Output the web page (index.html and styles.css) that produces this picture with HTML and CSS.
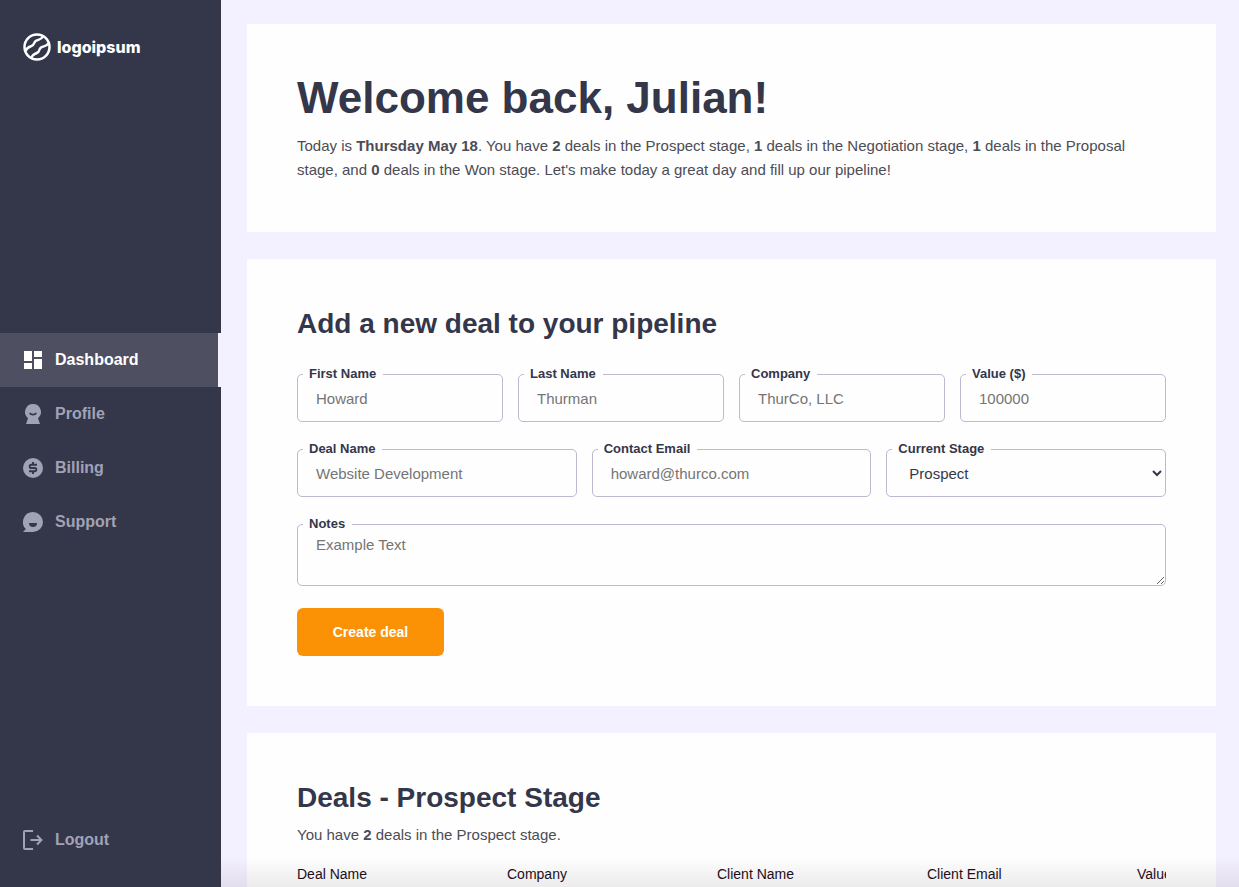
FILE: index.html
```html
<!DOCTYPE html>
<html lang="en">
  <head>
    <meta charset="utf-8">
    <meta name="viewport" content="width=device-width, initial-scale=1.0">
    <title>Dashboard</title>
    <link rel="stylesheet" href="styles.css">
  </head>
  <body>
    <div class="app">
      <aside class="sidebar">
        <a href="#" class="logo">
          <svg class="logo__mark" viewBox="0 0 28 28" fill="none" stroke="currentColor" stroke-width="2.5" aria-hidden="true">
            <circle cx="14" cy="14" r="12.5"/>
            <path d="M2.500 18C4 14.500 5.500 13.800 8 13.200C12 12.300 10.200 9.500 13 7.800C15.500 6.300 18 7.300 20 3.200"/>
            <path d="M8 25C9.500 21 11.500 21 13.800 20C17.500 18.500 15.200 16 18.200 14.300C21 12.800 23.500 13.800 25.600 10"/>
          </svg>
          <span>logoipsum</span>
        </a>
        <nav class="nav">
          <a href="#" class="nav__link nav__link--active">
            <svg class="nav__icon" viewBox="0 0 20 20" fill="currentColor" aria-hidden="true">
              <path d="M1 1h8v10H1zM11 1h8v6h-8zM1 13h8v6H1zM11 9h8v10h-8z"/>
            </svg>
            Dashboard
          </a>
          <a href="#" class="nav__link">
            <svg class="nav__icon" viewBox="0 0 20 20" aria-hidden="true">
              <path fill="currentColor" d="M10 0a8 8 0 0 1 5 14.200L17 20H3l2-5.800A8 8 0 0 1 10 0z"/>
              <path class="nav__cut" d="M6.800 8.800a3.400 2.800 0 0 0 6.400 0" fill="none" stroke-width="1.700"/>
            </svg>
            Profile
          </a>
          <a href="#" class="nav__link">
            <svg class="nav__icon" viewBox="0 0 20 20" aria-hidden="true">
              <circle cx="10" cy="10" r="10" fill="currentColor"/>
              <path class="nav__cut" d="M14 6.800H8.300a1.600 1.600 0 0 0 0 3.200h3.400a1.600 1.600 0 0 1 0 3.200H6M10 4v3M10 13v3" fill="none" stroke-width="1.900"/>
            </svg>
            Billing
          </a>
          <a href="#" class="nav__link">
            <svg class="nav__icon" viewBox="0 0 20 20" fill="currentColor" aria-hidden="true">
              <path fill-rule="evenodd" d="M10 0a10 10 0 0 1 0 20H0l2.900-2.900A10 10 0 0 1 10 0zM6 11a4 4 0 0 0 8 0z"/>
            </svg>
            Support
          </a>
        </nav>
        <a href="#" class="nav__link nav__link--logout">
          <svg class="nav__icon" viewBox="0 0 20 20" fill="none" stroke="currentColor" stroke-width="2" aria-hidden="true">
            <path d="M10 1H2a1 1 0 0 0-1 1v16a1 1 0 0 0 1 1h8M7.500 10H18M14 5.500l4.500 4.500-4.500 4.500"/>
          </svg>
          Logout
        </a>
      </aside>

      <main class="main">
        <section class="card">
          <h1 class="card__heading">Welcome back, Julian!</h1>
          <p class="text">Today is <strong>Thursday May 18</strong>. You have <strong>2</strong> deals in the Prospect stage, <strong>1</strong> deals in the Negotiation stage, <strong>1</strong> deals in the Proposal stage, and <strong>0</strong> deals in the Won stage. Let's make today a great day and fill up our pipeline!</p>
        </section>

        <section class="card">
          <h2 class="card__title">Add a new deal to your pipeline</h2>
          <form class="form">
            <div class="form__row">
              <div class="field">
                <label for="first-name">First Name</label>
                <input type="text" id="first-name" placeholder="Howard">
              </div>
              <div class="field">
                <label for="last-name">Last Name</label>
                <input type="text" id="last-name" placeholder="Thurman">
              </div>
              <div class="field">
                <label for="company">Company</label>
                <input type="text" id="company" placeholder="ThurCo, LLC">
              </div>
              <div class="field">
                <label for="value">Value ($)</label>
                <input type="text" id="value" placeholder="100000">
              </div>
            </div>
            <div class="form__row">
              <div class="field">
                <label for="deal-name">Deal Name</label>
                <input type="text" id="deal-name" placeholder="Website Development">
              </div>
              <div class="field">
                <label for="email">Contact Email</label>
                <input type="email" id="email" placeholder="howard@thurco.com">
              </div>
              <div class="field">
                <label for="stage">Current Stage</label>
                <select id="stage">
                  <option>Prospect</option>
                  <option>Negotiation</option>
                  <option>Proposal</option>
                  <option>Won</option>
                </select>
              </div>
            </div>
            <div class="field">
              <label for="notes">Notes</label>
              <textarea id="notes" placeholder="Example Text"></textarea>
            </div>
            <button type="submit" class="button">Create deal</button>
          </form>
        </section>

        <section class="card">
          <h2 class="card__title">Deals - Prospect Stage</h2>
          <p class="text">You have <strong>2</strong> deals in the Prospect stage.</p>
          <div class="table-wrap">
            <table class="deals">
              <thead>
                <tr>
                  <th>Deal Name</th>
                  <th>Company</th>
                  <th>Client Name</th>
                  <th>Client Email</th>
                  <th>Value</th>
                </tr>
              </thead>
            </table>
          </div>
        </section>
      </main>
    </div>
  </body>
</html>
```
FILE: styles.css
```css
* {
  box-sizing: border-box;
}
body {
  margin: 0;
  font-family: "Liberation Sans", Arial, sans-serif;
  font-size: 16px;
  color: #34364a;
  background-color: #f3f0ff;
}
h1, h2, p {
  margin: 0;
}
.app {
  display: flex;
  height: 100vh;
}

/* Sidebar */
.sidebar {
  display: flex;
  flex-direction: column;
  justify-content: space-between;
  flex: 0 0 221px;
  padding: 32px 0 20px;
  background-color: #34364a;
}
.logo {
  display: flex;
  align-items: center;
  gap: 6px;
  height: 30px;
  padding-left: 23px;
  color: #fff;
  font-family: Inter, sans-serif;
  font-size: 16px;
  font-weight: 800;
  text-decoration: none;
}
.logo__mark {
  width: 28px;
  height: 28px;
}
.nav {
  padding-top: 6px;
}
.nav__link {
  display: flex;
  align-items: center;
  gap: 12px;
  height: 54px;
  padding-left: 23px;
  color: #a1a2b5;
  font-weight: 700;
  text-decoration: none;
}
.nav__link--active {
  color: #fff;
  background-color: #4e4f61;
  border-right: 3px solid #f3f0ff;
}
.nav__icon {
  width: 20px;
  height: 20px;
}
.nav__cut {
  stroke: #34364a;
}

/* Content */
.main {
  flex: 1;
  min-width: 0;
  padding: 24px 23px 24px 26px;
  overflow-y: auto;
  scrollbar-width: none;
}
.main::after {
  content: '';
  position: fixed;
  right: 0;
  bottom: 0;
  left: 221px;
  height: 30px;
  background-image: linear-gradient(transparent, rgba(30, 10, 30, 0.08));
  pointer-events: none;
}
.card {
  margin-bottom: 27px;
  padding: 50px;
  background-color: #fefefe;
}
.card__heading {
  margin-bottom: 12px;
  font-size: 44px;
  line-height: 48px;
}
.card__title {
  margin-bottom: 10px;
  font-size: 28px;
  line-height: 30px;
}
.text {
  color: #4c4c55;
  font-size: 15px;
  line-height: 24px;
}

/* Form */
.form {
  display: grid;
  gap: 27px;
  padding-top: 25px;
}
.form__row {
  display: flex;
  gap: 15px;
}
.field {
  position: relative;
  display: flex;
  flex: 1;
  min-width: 0;
}
.field label {
  position: absolute;
  top: -8px;
  left: 6px;
  padding: 0 7px 0 6px;
  background-color: #fefefe;
  font-size: 13px;
  font-weight: 700;
  line-height: 16px;
}
.field input, .field select, .field textarea {
  width: 100%;
  height: 48px;
  padding: 0 18px;
  border: 1px solid #bdb9d0;
  border-radius: 5px;
  background-color: transparent;
  color: #34364a;
  font-family: inherit;
  font-size: 15px;
}
.field select {
  padding: 0 0 0 18px;
}
.field textarea {
  height: 62px;
  padding-top: 11px;
}
.field ::placeholder {
  color: #757575;
}
.button {
  justify-self: start;
  width: 147px;
  height: 48px;
  margin-top: -5px;
  border: 0;
  border-radius: 6px;
  background-color: #fb9205;
  color: #fff;
  font-family: inherit;
  font-size: 14px;
  font-weight: 700;
}

/* Deals table */
.table-wrap {
  overflow: hidden;
  margin-top: 17px;
}
.deals {
  width: 1050px;
  border-collapse: collapse;
  table-layout: fixed;
}
.deals th {
  padding: 0;
  color: #1c0f1c;
  font-size: 14px;
  font-weight: 500;
  line-height: 20px;
  text-align: left;
}
```
